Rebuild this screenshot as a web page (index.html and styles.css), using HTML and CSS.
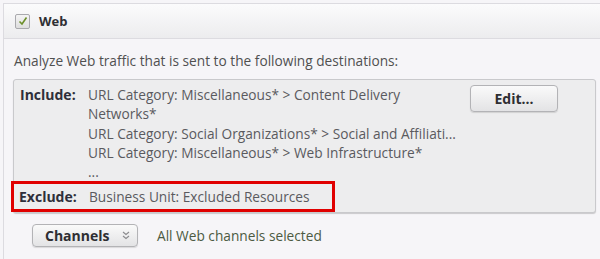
FILE: index.html
```html
<!DOCTYPE html>
<html lang="en">
<head>
  <meta charset="UTF-8" />
  <meta name="viewport" content="width=device-width, initial-scale=1.0"/>
  <title>Web destinations</title>
  <link rel="stylesheet" href="styles.css">
</head>
<body>
  <div class="panel">
    <div class="panel-head">
      <span class="checkbox">
        <svg width="10" height="10" viewBox="0 0 10 10"><path d="M1.5 5.5 L4 8 L8.5 1.5" fill="none" stroke="#6c8f2a" stroke-width="1.6"/></svg>
      </span>
      <span class="panel-title">Web</span>
    </div>

    <div class="panel-body">
      <p class="intro">Analyze Web traffic that is sent to the following destinations:</p>

      <div class="dest-box">
        <div class="dest-row">
          <div class="dest-label">Include:</div>
          <div class="dest-values">
            <div>URL Category: Miscellaneous* &gt; Content Delivery<br>Networks*</div>
            <div>URL Category: Social Organizations* &gt; Social and Affiliati...</div>
            <div>URL Category: Miscellaneous* &gt; Web Infrastructure*</div>
            <div class="more">...</div>
          </div>
          <button class="btn edit-btn">Edit...</button>
        </div>
        <div class="dest-row exclude">
          <div class="dest-label">Exclude:</div>
          <div class="dest-values">Business Unit: Excluded Resources</div>
        </div>
      </div>

      <div class="channels">
        <button class="btn channels-btn">Channels
          <svg class="chev" width="8" height="9" viewBox="0 0 8 9"><path d="M1 1 L4 3.5 L7 1 M1 5 L4 7.5 L7 5" fill="none" stroke="#8a8a8e" stroke-width="1.1"/></svg>
        </button>
        <span class="channels-note">All Web channels selected</span>
      </div>
    </div>
  </div>
</body>
</html>
```
FILE: styles.css
```css
body {
  font-family: 'Open Sans', 'Liberation Sans', sans-serif;
  font-size: 13.7px;
  color: #4a4a4a;
  margin: 0;
  padding: 0;
  background: #f6f5f8;
}

.panel {
  margin: 3px 0 0 3px;
  border-top: 1px solid #dcdbe0;
  border-left: 1px solid #dcdbe0;
  height: 256px;
}

.panel-head {
  height: 34px;
  display: flex;
  align-items: center;
  gap: 9px;
  padding-left: 11px;
  background: linear-gradient(#fbfbfc, #ececee);
  border-bottom: 1px solid #dcdbe0;
}

.checkbox {
  width: 13px;
  height: 13px;
  border: 1px solid #a9a9ad;
  border-radius: 2px;
  background: linear-gradient(#f4f4f4, #dedede);
  display: flex;
  align-items: center;
  justify-content: center;
}

.panel-title {
  font-weight: bold;
  font-size: 13px;
  color: #2e2e33;
}

.panel-body {
  padding: 13px 3px 0 9px;
}

.intro {
  margin: 0 0 9px 1px;
  line-height: 18px;
  color: #505050;
}

.dest-box {
  width: 575px;
  background: #ededee;
  border: 1px solid #c9c9cc;
  border-radius: 3px;
  box-shadow: 0 1px 1px rgba(0, 0, 0, 0.18);
  padding: 5px 0 0 6px;
}

.dest-row {
  display: flex;
  line-height: 19.4px;
}

.dest-label {
  width: 68px;
  font-weight: bold;
  font-size: 14px;
  color: #2f2f3a;
  flex: none;
}

.dest-values {
  width: 381px;
  color: #5a5a5e;
  white-space: nowrap;
}

.more {
  line-height: 18px;
}

.btn {
  font-family: inherit;
  font-weight: bold;
  color: #2e2e33;
  border: 1px solid #b3b3b6;
  border-radius: 4px;
  background: linear-gradient(#fafafa, #e3e3e5);
  box-shadow: 0 1px 1px rgba(0, 0, 0, 0.12);
  cursor: pointer;
}

.edit-btn {
  width: 88px;
  height: 27px;
  font-size: 14px;
  margin: 0 0 0 1px;
}

.exclude {
  width: 313px;
  margin-left: -9px;
  border: 3px solid #e00000;
  padding: 3px 0 3px 5px;
  line-height: 19px;
}

.exclude .dest-values {
  padding-left: 2px;
}

.channels {
  display: flex;
  align-items: center;
  gap: 19px;
  padding: 11px 0 0 19px;
}

.channels-btn {
  width: 106px;
  height: 23px;
  font-size: 14px;
  text-align: left;
  padding: 0 0 0 12px;
  display: flex;
  align-items: center;
}

.chev {
  margin-left: 13px;
}

.channels-note {
  color: #4c5a42;
  font-size: 13.7px;
}
```
